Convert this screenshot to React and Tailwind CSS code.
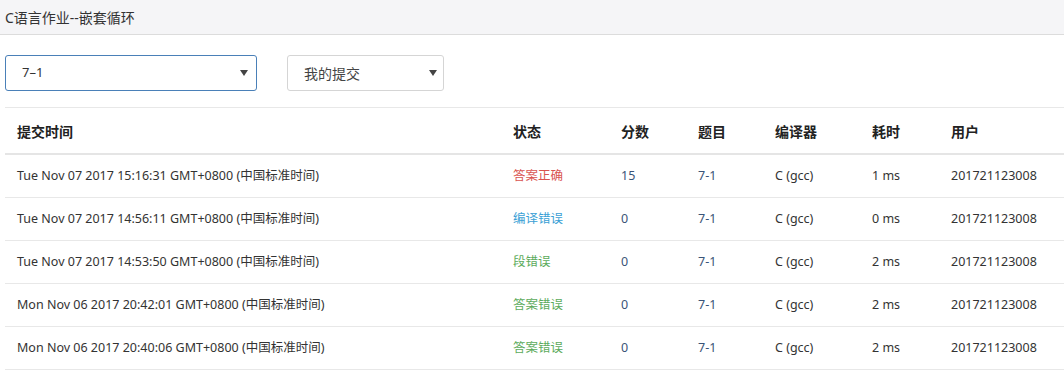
import React from "react";

const rows = [
  { t: "Tue Nov 07 2017 15:16:31 GMT+0800 (中国标准时间)", s: "答案正确", c: "text-[#d9534f]", score: "15", ms: "1 ms" },
  { t: "Tue Nov 07 2017 14:56:11 GMT+0800 (中国标准时间)", s: "编译错误", c: "text-[#3a9fd5]", score: "0", ms: "0 ms" },
  { t: "Tue Nov 07 2017 14:53:50 GMT+0800 (中国标准时间)", s: "段错误", c: "text-[#5cab5c]", score: "0", ms: "2 ms" },
  { t: "Mon Nov 06 2017 20:42:01 GMT+0800 (中国标准时间)", s: "答案错误", c: "text-[#5cab5c]", score: "0", ms: "2 ms" },
  { t: "Mon Nov 06 2017 20:40:06 GMT+0800 (中国标准时间)", s: "答案错误", c: "text-[#5cab5c]", score: "0", ms: "2 ms" },
];

const font = { fontFamily: '"Segoe UI", "Noto Sans", "Noto Sans CJK SC", sans-serif' };

function Caret() {
  return (
    <svg width="8" height="6" viewBox="0 0 8 6" className="shrink-0">
      <path d="M0 0 L8 0 L4 6 Z" fill="#444" />
    </svg>
  );
}

export default function App() {
  return (
    <div className="w-[1064px] h-[373px] overflow-hidden bg-white text-[#333]" style={font}>
      <div className="h-[35px] bg-[#f5f5f7] border-b border-[#dcdcdc] flex items-center pl-[5px] text-[14px] text-[#333]">
        C语言作业--嵌套循环
      </div>
      <div className="flex items-center pl-[5px] pt-[20px] pb-[16px] gap-[30px]">
        <div className="w-[252px] h-[36px] border border-[#4a80b8] rounded-[3px] flex items-center justify-between pl-[16px] pr-[8px] text-[13px] text-[#333]">
          <span>7–1</span>
          <Caret />
        </div>
        <div className="w-[157px] h-[36px] border border-[#d5d5d5] rounded-[3px] flex items-center justify-between pl-[16px] pr-[6px] text-[14px] text-[#444]">
          <span>我的提交</span>
          <Caret />
        </div>
      </div>
      <div className="ml-[5px] border-t border-[#e8e8e8]">
        <div className="flex h-[47px] pt-[1px] items-center border-b-2 border-[#e5e5e5] text-[14px] font-bold text-[#222]">
          <div className="w-[496px] pl-[12px]">提交时间</div>
          <div className="w-[108px] pl-[12px]">状态</div>
          <div className="w-[77px] pl-[12px]">分数</div>
          <div className="w-[77px] pl-[12px]">题目</div>
          <div className="w-[97px] pl-[12px]">编译器</div>
          <div className="w-[79px] pl-[12px]">耗时</div>
          <div className="flex-1 pl-[12px]">用户</div>
        </div>
        {rows.map((r, i) => (
          <div key={i} className="flex h-[43px] items-center border-b border-[#e8e8e8] text-[12.5px] text-[#333]">
            <div className="w-[496px] pl-[12px]">{r.t}</div>
            <div className={"w-[108px] pl-[12px] " + r.c}>{r.s}</div>
            <div className="w-[77px] pl-[12px] text-[#3b5478]">{r.score}</div>
            <div className="w-[77px] pl-[12px] text-[#3b5478]">7-1</div>
            <div className="w-[97px] pl-[12px]">C (gcc)</div>
            <div className="w-[79px] pl-[12px]">{r.ms}</div>
            <div className="flex-1 pl-[12px]">201721123008</div>
          </div>
        ))}
      </div>
    </div>
  );
}
